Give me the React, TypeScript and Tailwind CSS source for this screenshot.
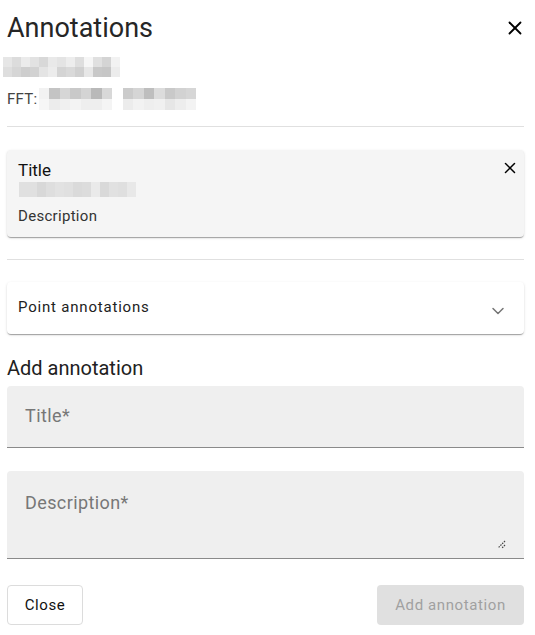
import { X, ChevronDown } from 'lucide-react'

const row1a = ['#e6e6e6', '#dcdcdc', '#ebebeb', '#e2e2e2', '#d8d8d8', '#e9e9e9', '#e4e4e4', '#ededed', '#dedede', '#f6f6f6', '#e0e0e0', '#d4d4d4', '#f2f2f2', '#fff']
const row1b = ['#dedede', '#d6d6d6', '#cecece', '#d2d2d2', '#e4e4e4', '#ececec', '#d4d4d4', '#d9d9d9', '#d0d0d0', '#e7e7e7', '#c8c8c8', '#c6c6c6', '#ececec', '#fff']
const fftA = ['#f2f2f2', '#c4c4c4', '#d6d6d6', '#c9c9c9', '#d4d4d4', '#b9b9b9', '#d8d8d8', '#fff', '#cbcbcb', '#d5d5d5', '#bebebe', '#dcdcdc', '#c9c9c9', '#d2d2d2', '#d6d6d6']
const fftB = ['#f6f6f6', '#ececec', '#f0f0f0', '#f3f3f3', '#eeeeee', '#eeeeee', '#f4f4f4', '#fff', '#ececec', '#f2f2f2', '#eeeeee', '#f0f0f0', '#e6e6e6', '#ededed', '#f3f3f3']
const cardRow = ['#e0e0e0', '#e0e0e0', '#d8d8d8', '#dedede', '#e2e2e2', '#e0e0e0', '#dadada', '#dcdcdc', '#eaeaea', '#d9d9d9', '#e1e1e1', '#dfdfdf', '#e8e8e8']

function Blocks({ colors, w, h }: { colors: string[]; w: string; h: string }) {
    return (
        <div className="flex">
            {colors.map((c, i) => (
                <div key={i} className={`${w} ${h}`} style={{ backgroundColor: c }}></div>
            ))}
        </div>
    )
}

export default function App() {
    return (
        <div className="w-[535px] h-[635px] bg-white pl-[7px] pr-[11px] font-['Roboto',sans-serif] text-[#212121] overflow-hidden">
            <div className="flex items-center justify-between pt-[10px] h-[46px]">
                <h2 className="text-[27px] leading-[32px] font-normal text-[#262626]">Annotations</h2>
                <X className="w-[22px] h-[22px] text-black mr-[-2px]" strokeWidth={2} />
            </div>
            <div className="mt-[11px] ml-[-4px] flex flex-col">
                <Blocks colors={row1a} w="w-[9px]" h="h-[10px]" />
                <Blocks colors={row1b} w="w-[9px]" h="h-[10px]" />
            </div>
            <div className="mt-[11px] flex items-center">
                <span className="text-[15px] leading-[20px] text-[#444] tracking-[0.3px]">FFT:</span>
                <div className="flex flex-col ml-[1px]">
                    <Blocks colors={fftA} w="w-[10.5px]" h="h-[11px]" />
                    <Blocks colors={fftB} w="w-[10.5px]" h="h-[11px]" />
                </div>
            </div>
            <div className="mt-[16px] h-px bg-[#e0e0e0]"></div>

            {/* saved annotation */}
            <div className="mt-[23px] relative rounded bg-[#f5f5f5] shadow-[0_2px_1px_-1px_rgba(0,0,0,0.2),0_1px_1px_0_rgba(0,0,0,0.14),0_1px_3px_0_rgba(0,0,0,0.12)] h-[87px] px-[11px] pt-[10px]">
                <div className="text-[17px] leading-[20px] font-normal text-[#111]">Title</div>
                <div className="mt-[2px] ml-[1px]">
                    <Blocks colors={cardRow} w="w-[9px]" h="h-[15px]" />
                </div>
                <div className="mt-[9px] text-[15px] leading-[20px] text-[#333] tracking-[0.3px]">Description</div>
                <X className="absolute right-[5px] top-[9px] w-[18px] h-[18px] text-black" strokeWidth={2} />
            </div>

            <div className="mt-[22px] h-px bg-[#e0e0e0]"></div>

            <div className="mt-[22px] rounded bg-white shadow-[0_2px_1px_-1px_rgba(0,0,0,0.2),0_1px_1px_0_rgba(0,0,0,0.14),0_1px_3px_0_rgba(0,0,0,0.12)] h-[52px] flex items-center justify-between px-[11px]">
                <span className="text-[15px] font-normal tracking-[0.8px] text-[#222] mt-[-1px]">Point annotations</span>
                <ChevronDown className="w-[20px] h-[20px] text-[#757575] mr-[5px] mt-[6px]" strokeWidth={1.8} />
            </div>

            <div className="mt-[21px] text-[20px] leading-[26px] text-[#212121]">Add annotation</div>

            <div className="mt-[5px] h-[62px] rounded-t bg-[#efefef] border-b border-[#8a8a8a] flex items-center px-[18px]">
                <span className="text-[18px] text-[#777] tracking-[0.4px] mt-[-2px]">Title*</span>
            </div>

            <div className="mt-[23px] h-[88px] rounded-t bg-[#efefef] border-b border-[#8a8a8a] relative px-[18px] pt-[18px]">
                <span className="text-[18px] text-[#777] tracking-[0.4px]">Description*</span>
                <svg className="absolute right-[18px] bottom-[9px]" width="9" height="9" viewBox="0 0 9 9">
                    <path d="M8 1 L1 8 M8 5 L5 8" stroke="#444" strokeWidth="1.2" strokeDasharray="1.5 1" />
                </svg>
            </div>

            <div className="mt-[26px] flex justify-between">
                <button className="h-[40px] w-[76px] rounded border border-[#dcdcdc] bg-white text-[15px] font-normal tracking-[0.6px] text-[#111]">
                    Close
                </button>
                <button className="h-[40px] w-[147px] rounded bg-[#e0e0e0] text-[15px] font-normal tracking-[0.6px] text-[#a0a0a0]">
                    Add annotation
                </button>
            </div>
        </div>
    )
}
